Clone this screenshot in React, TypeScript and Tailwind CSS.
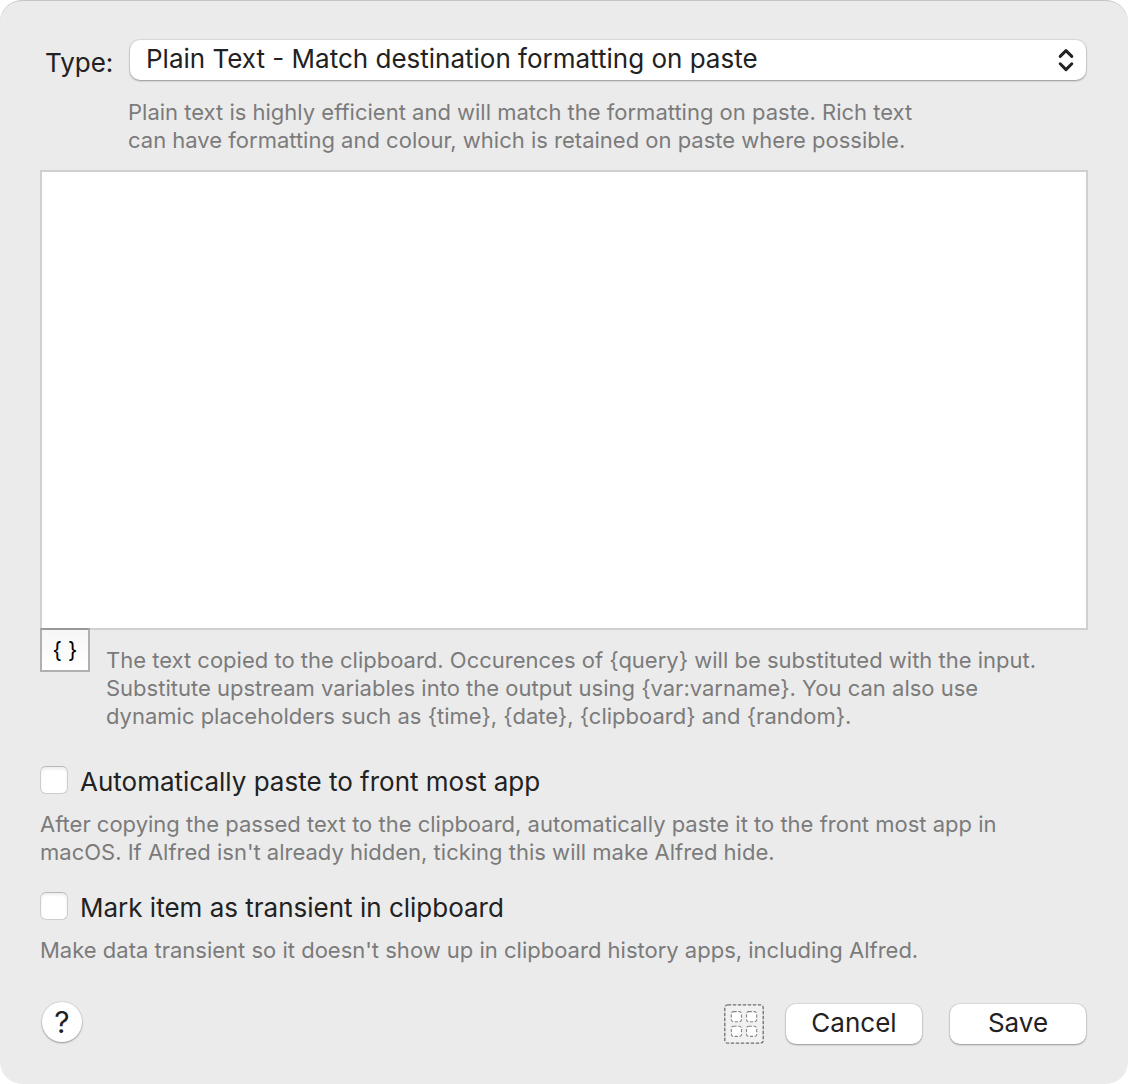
import { useState } from "react";

const TYPES = ["Plain Text - Match destination formatting on paste", "Rich Text - Retain formatting on paste"];

type OptionProps = {
  id: string;
  label: string;
  help: React.ReactNode;
};

function Option({ id, label, help }: OptionProps) {
  const [checked, setChecked] = useState(false);

  return (
    <div>
      <div className="flex items-start gap-3">
        <input
          id={id}
          type="checkbox"
          checked={checked}
          onChange={(e) => setChecked(e.target.checked)}
          className="size-7 shrink-0 appearance-none rounded-md border border-[#cdcdcd] border-t-[#b8b8b8] bg-white inset-shadow-[0_2px_3px_#ececec] checked:bg-blue-500"
        />
        <label htmlFor={id} className="text-[26px] leading-8">{label}</label>
      </div>
      <p className="mt-3 text-[22px] leading-7 text-[#7b7b7b]">{help}</p>
    </div>
  );
}

function ChevronsIcon() {
  return (
    <svg
      className="pointer-events-none absolute top-[7px] right-[11px]"
      width="18"
      height="26"
      viewBox="0 0 18 26"
      fill="none"
      stroke="#222"
      strokeWidth="3"
      strokeLinecap="round"
      strokeLinejoin="round"
    >
      <path d="M3.2 9.4 9 3.6l5.8 5.8M3.2 16.8 9 22.6l5.8-5.8" />
    </svg>
  );
}

function GridIcon() {
  return (
    <svg width="40" height="40" viewBox="0 0 40 40" fill="none">
      <rect x="0.8" y="0.8" width="38.4" height="38.4" rx="3" fill="#f1f1f1" stroke="#6e6e6e" strokeWidth="1.3" strokeDasharray="3.4 1.6" />
      <g fill="#fff" stroke="#858585" strokeWidth="1.1" strokeDasharray="3.2 1.6">
        <rect x="7.3" y="7.6" width="10.2" height="10.2" rx="2.2" />
        <rect x="22.5" y="7.6" width="10.2" height="10.2" rx="2.2" />
        <rect x="7.3" y="22.2" width="10.2" height="10.2" rx="2.2" />
        <rect x="22.5" y="22.2" width="10.2" height="10.2" rx="2.2" />
      </g>
    </svg>
  );
}

const BUTTON =
  "h-10 w-[136px] rounded-[10px] bg-white pb-0.5 text-[26px] leading-8 shadow-[0_0_1px_1px_#00000012,0_1px_2px_#00000050]";

export default function App() {
  const [type, setType] = useState(TYPES[0]);
  const [text, setText] = useState("");

  return (
    <main className="rounded-[22px] border-t border-[#c4c4c4] bg-[#ebebeb] px-10 pt-[39px] pb-[38px] font-[Inter,sans-serif] text-[#222]">
      <div className="flex items-center">
        <label htmlFor="type" className="w-[90px] pt-1.5 pl-[5px] text-[26px] leading-8">Type:</label>
        <div className="relative mr-0.5 flex-1">
          <select
            id="type"
            value={type}
            onChange={(e) => setType(e.target.value)}
            className="block h-10 w-full appearance-none rounded-[10px] bg-white px-4 pb-0.5 text-[26px] leading-8 shadow-[0_0_1px_1px_#00000012,0_1px_2px_#00000050]"
          >
            {TYPES.map((t) => <option key={t}>{t}</option>)}
          </select>
          <ChevronsIcon />
        </div>
      </div>
      <p className="mt-[18px] ml-[88px] text-[22px] leading-7 text-[#7b7b7b]">
        Plain text is highly efficient and will match the formatting on paste. Rich text<br />
        can have formatting and colour, which is retained on paste where possible.
      </p>
      <textarea
        aria-label="Text"
        value={text}
        onChange={(e) => setText(e.target.value)}
        className="mt-4 block h-[460px] w-full resize-none border-2 border-[#d0d0d0] bg-white p-2 text-[22px] outline-none"
      />
      <div className="-mt-0.5 flex items-start gap-4">
        <button
          aria-label="Insert placeholder"
          className="relative h-11 w-[50px] shrink-0 border-2 border-[#b0b0b0] border-t-[#999] bg-linear-to-b from-[#f6f6f6] to-white text-[22px] text-black"
        >
          {"{ }"}
        </button>
        <p className="mt-[18px] text-[22px] leading-7 text-[#7b7b7b]">
          {"The text copied to the clipboard. Occurences of {query} will be substituted with the input."}<br />
          {"Substitute upstream variables into the output using {var:varname}. You can also use"}<br />
          {"dynamic placeholders such as {time}, {date}, {clipboard} and {random}."}
        </p>
      </div>
      <div className="mt-9 flex flex-col gap-[26px]">
        <Option
          id="paste"
          label="Automatically paste to front most app"
          help={<>After copying the passed text to the clipboard, automatically paste it to the front most app in<br />macOS. If Alfred isn't already hidden, ticking this will make Alfred hide.</>}
        />
        <Option
          id="transient"
          label="Mark item as transient in clipboard"
          help="Make data transient so it doesn't show up in clipboard history apps, including Alfred."
        />
      </div>
      <div className="mt-[38px] flex items-center px-0.5">
        <button
          aria-label="Help"
          className="mb-1 size-10 rounded-full bg-white text-[30px] leading-10 shadow-[0_0_1px_1px_#00000012,0_1px_2px_#00000050]"
        >
          ?
        </button>
        <button aria-label="Layout" className="mr-[22px] ml-auto"><GridIcon /></button>
        <button className={`${BUTTON} mr-7`}>Cancel</button>
        <button className={BUTTON}>Save</button>
      </div>
    </main>
  );
}
